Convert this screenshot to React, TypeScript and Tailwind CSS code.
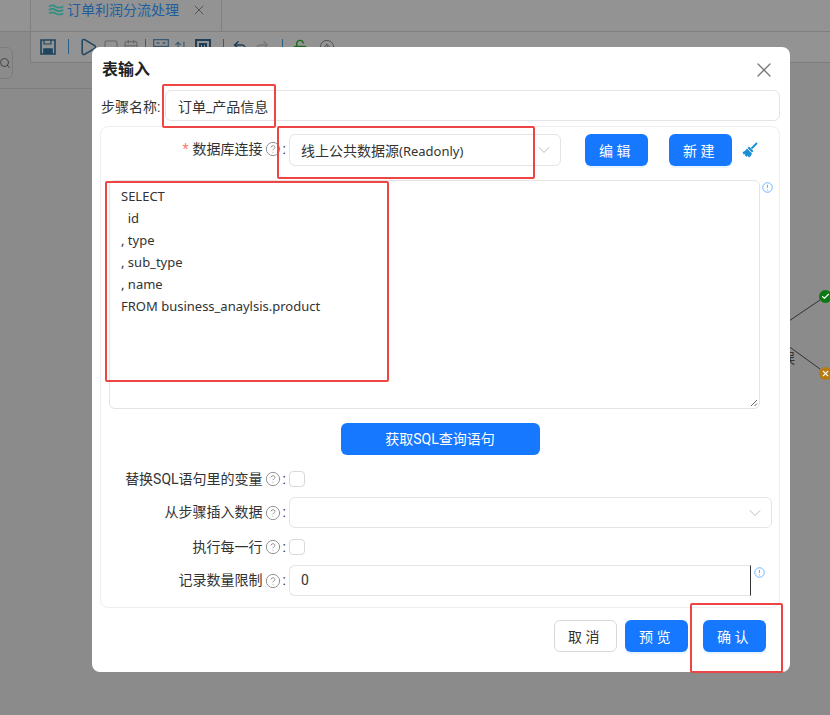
import { ChevronDown, X, Play, Square, CalendarDays, Undo2, Redo2, LockOpen, Search, Check, CircleHelp, ArrowUpDown, CircleArrowUp } from 'lucide-react';
import { ReactNode } from 'react';

const font = { fontFamily: 'Roboto, "Noto Sans CJK SC", sans-serif' };
const latin = { fontFamily: '"Noto Sans", "Noto Sans CJK SC", sans-serif' };

function Help() {
  return <CircleHelp className="w-[16px] h-[16px] text-[#8c8c8c] mx-[2px] shrink-0" strokeWidth={1.4} />;
}

function Info() {
  return (
    <svg viewBox="0 0 12 12" className="w-[11px] h-[11px] shrink-0 text-[#69b1ff]" fill="none" stroke="currentColor">
      <circle cx="6" cy="6" r="5.2" />
      <path d="M6 3v3.6M6 8.2v1" strokeWidth="1.2" />
    </svg>
  );
}

function Btn({ children, primary = true, className = '' }: { children: ReactNode; primary?: boolean; className?: string }) {
  return (
    <button
      className={
        'h-8 rounded-md text-[14px] tracking-[0.25em] pt-[2px] ' +
        (primary
          ? 'bg-[#1677ff] text-white shadow-[0_2px_0_rgba(5,145,255,0.1)] '
          : 'bg-white border border-[#d9d9d9] text-[#333] ') +
        className
      }
    >
      {children}
    </button>
  );
}

function Label({ children, required = false }: { children: ReactNode; required?: boolean }) {
  return (
    <div className="w-[188px] shrink-0 flex items-center justify-end text-[14px] text-[#333]">
      {required && <span className="text-[#ff7875] mr-1">*</span>}
      <span>{children}</span>
      <Help />
      <span className="mr-[3px]">:</span>
    </div>
  );
}

function Checkbox() {
  return <div className="w-4 h-4 rounded border border-[#d9d9d9] bg-white" />;
}

function Divider() {
  return <div className="w-px h-[15px] bg-[#2a5f86]" />;
}

export default function App() {
  return (
    <div className="relative w-[830px] h-[715px] overflow-hidden bg-[#8b8b8b]" style={font}>
      {/* page behind the mask */}
      <div className="h-[32px] flex border-b border-[#7f7f7f] bg-[#939393]">
        <div className="ml-[30px] w-[192px] h-full border-x border-[#808080] flex items-center pl-[17px] pb-[11px] text-[14px] text-[#1d5f9e]">
          <svg viewBox="0 0 20 14" className="w-[17px] h-[14px] text-[#2f8f80] mr-[2px]" fill="none" stroke="currentColor" strokeWidth="2">
            <path d="M1 3c3-2 5-2 8 0s5 2 9 0M1 7c3-2 5-2 8 0s5 2 9 0M1 11c3-2 5-2 8 0s5 2 9 0" />
          </svg>
          <span>订单利润分流处理</span>
          <X className="w-[16px] h-[16px] ml-[12px] text-[#555]" strokeWidth={1.5} />
        </div>
      </div>
      <div className="h-[31px] ml-[30px] flex items-center pb-[1px] border-b border-l border-[#7d7d7d] bg-[#939393] text-[#1f4560]">
        <svg viewBox="0 0 16 16" className="w-4 h-4 ml-[9px]" fill="none" stroke="currentColor" strokeWidth="1.6">
          <path d="M1 1h14v14H1z" />
          <path d="M4 1v4h7V1" strokeWidth="1.200" />
          <path d="M4 15v-5h8v5" fill="currentColor" />
        </svg>
        <div className="ml-[12px]"><Divider /></div>
        <Play className="w-[20px] h-[20px] ml-[9px]" strokeWidth={1.8} />
        <Square className="w-[16px] h-[16px] ml-[5px] text-[#666]" strokeWidth={1.6} />
        <CalendarDays className="w-[16px] h-[16px] ml-[4px] text-[#666]" strokeWidth={1.6} />
        <div className="ml-[6px]"><Divider /></div>
        <svg viewBox="0 0 16 8" className="w-4 h-2 ml-[7px] mb-[7px] text-[#3a5a70]" fill="none" stroke="currentColor" strokeWidth="1.300">
          <path d="M.7.7h14.600v6.600H.7zM3.500 4h3M9.500 4h3" />
        </svg>
        <ArrowUpDown className="w-[14px] h-[14px] ml-[5px] text-[#3a5a70]" />
        <svg viewBox="0 0 16 16" className="w-4 h-4 ml-[7px] text-[#1f3f58]" fill="none" stroke="currentColor" strokeWidth="2">
          <path d="M1 1h14v14H1zM5 11V5h6v6M8 5v6" />
        </svg>
        <div className="ml-[12px]"><Divider /></div>
        <Undo2 className="w-[16px] h-[16px] ml-[8px] text-[#1f3f58]" strokeWidth={2.200} />
        <Redo2 className="w-[16px] h-[16px] ml-[6px] text-[#777]" strokeWidth={2} />
        <div className="ml-[12px]"><Divider /></div>
        <LockOpen className="w-[16px] h-[16px] ml-[9px] text-[#1e6b1e]" strokeWidth={2} />
        <CircleArrowUp className="w-[16px] h-[16px] ml-[11px] text-[#555]" strokeWidth={1.5} />
      </div>
      <div className="relative h-[652px] bg-[radial-gradient(#727272_0.7px,transparent_0.7px)] bg-[length:20px_20px]">
        <div className="absolute left-[-30px] top-[-16px] w-[43px] h-[32px] rounded-md border border-[#7d7d7d] flex items-center justify-end pr-[1px]">
          <Search className="w-3 h-3 text-[#444]" />
        </div>
        <div className="absolute left-0 top-[25px] w-[92px] h-px bg-[#7d7d7d]" />
        <svg className="absolute left-[780px] top-[220px] w-[50px] h-[100px]" fill="none" stroke="#333">
          <path d="M0 44 L40 17 M0 57 L40 86" />
        </svg>
        <span className="absolute left-[781px] top-[285px] text-[14px] text-[#333]">误</span>
        <div className="absolute left-[819px] top-[227px] w-[13px] h-[13px] rounded-full bg-[#0b7a12] flex items-center justify-center">
          <Check className="w-[9px] h-[9px] text-white" strokeWidth={3} />
        </div>
        <div className="absolute left-[819px] top-[304px] w-[13px] h-[13px] rounded-full bg-[#b87b12] flex items-center justify-center">
          <X className="w-[9px] h-[9px] text-white" strokeWidth={3} />
        </div>
      </div>

      {/* dialog */}
      <div className="absolute left-[92px] top-[47px] w-[698px] h-[625px] bg-white rounded-lg pt-[12px] px-2 text-[#333]">
        <div className="flex items-center justify-between pl-[2px] pr-[6px] h-[22px]">
          <span className="text-[16px] font-bold text-[#222]">表输入</span>
          <X className="w-[24px] h-[24px] text-[#777]" strokeWidth={1.3} />
        </div>
        <div className="flex items-center mt-[9px] h-[31px]">
          <span className="w-[65px] pl-px pt-[3px] text-[14px] text-[#333] shrink-0">步骤名称:</span>
          <div className="flex-1 h-[31px] border border-[#e4e4e4] rounded-md flex items-center pl-3 pt-[3px] text-[14px] mr-[2px]">订单_产品信息</div>
        </div>

        <div className="mr-[2px] mt-[5px] h-[482px] border border-[#efefef] rounded-lg pt-[7px] flex flex-col">
          <div className="flex items-center h-8">
            <div className="-mt-[2px] flex"><Label required>数据库连接</Label></div>
            <div className="w-[272px] h-8 border border-[#e4e4e4] rounded-md flex items-center justify-between pl-[11px] pr-[6px] text-[14px]">
              <span className="pt-[3px]">线上公共数据源<span className="text-[13px]" style={latin}>(Readonly)</span></span>
              <ChevronDown className="w-[20px] h-[20px] text-[#bdbdbd]" strokeWidth={1.2} />
            </div>
            <Btn className="w-[63px] ml-6">编辑</Btn>
            <Btn className="w-[63px] ml-[21px]">新建</Btn>
            <svg viewBox="0 0 16 16" className="w-[16px] h-[16px] ml-[10px] text-[#1a8fd8]" fill="currentColor">
              <path d="M15 1L9.500 6.500" stroke="currentColor" strokeWidth="1.800" />
              <path d="M7 4.500L11.500 9 10 10.500 5.500 6z" />
              <path d="M5 6.500L10 11.500C9.500 13 8.500 14.500 7 15.500L5.500 13.500 5 15 3 13.500 3 12 1.500 12.500.5 10C2.500 9.500 4 8 5 6.500z" />
            </svg>
          </div>

          <div className="flex items-start mt-[14px] pl-2">
            <div className="w-[651px] h-[229px] border border-[#e4e4e4] rounded-md pl-[11px] pt-[4px] text-[13px] leading-[22px] relative whitespace-pre" style={latin}>
              <div>SELECT</div>
              <div>{'  id'}</div>
              <div>, type</div>
              <div>, sub_type</div>
              <div>, name</div>
              <div>FROM business_anaylsis.product</div>
              <svg viewBox="0 0 8 8" className="absolute right-[1px] bottom-[1px] w-2 h-2" stroke="#666" fill="none">
                <path d="M1 7L7 1M4.500 7L7 4.500" />
              </svg>
            </div>
            <div className="ml-[2px] mt-[2px]"><Info /></div>
          </div>

          <div className="flex justify-center mt-[14px]">
            <button className="w-[199px] h-8 rounded-md bg-[#1677ff] text-white text-[14px] pt-[1px]">获取SQL查询语句</button>
          </div>

          <div className="flex items-center mt-4 h-4">
            <Label>替换SQL语句里的变量</Label>
            <Checkbox />
          </div>
          <div className="flex items-center mt-[10px] h-[31px]">
            <Label>从步骤插入数据</Label>
            <div className="w-[483px] h-[31px] border border-[#e4e4e4] rounded-md flex items-center justify-end pr-[6px]">
              <ChevronDown className="w-[20px] h-[20px] text-[#bdbdbd]" strokeWidth={1.2} />
            </div>
          </div>
          <div className="flex items-center mt-[11px] h-4">
            <Label>执行每一行</Label>
            <Checkbox />
          </div>
          <div className="flex items-start mt-[10px] h-[31px]">
            <div className="h-[31px] flex"><Label>记录数量限制</Label></div>
            <div className="w-[462px] h-[31px] border border-[#e4e4e4] border-r-[#333] rounded-l-md flex items-center pl-[11px] text-[14px]">0</div>
            <div className="ml-[3px] mt-[2px]"><Info /></div>
          </div>
        </div>

        <div className="flex justify-end mt-[12px] pr-4">
          <Btn primary={false} className="w-[63px]">取消</Btn>
          <Btn className="w-[63px] ml-2">预览</Btn>
          <Btn className="w-[63px] ml-[15px]">确认</Btn>
        </div>
      </div>

      {/* red annotation boxes */}
      <div className="absolute left-[162px] top-[84px] w-[114px] h-[44px] border-2 border-[#ef4444] rounded-[2px]" />
      <div className="absolute left-[277px] top-[126px] w-[258px] h-[53px] border-2 border-[#ef4444] rounded-[2px]" />
      <div className="absolute left-[105px] top-[181px] w-[284px] h-[201px] border-2 border-[#ef4444] rounded-[2px]" />
      <div className="absolute left-[690px] top-[603px] w-[93px] h-[70px] border-2 border-[#ef4444] rounded-[2px]" />
    </div>
  );
}
